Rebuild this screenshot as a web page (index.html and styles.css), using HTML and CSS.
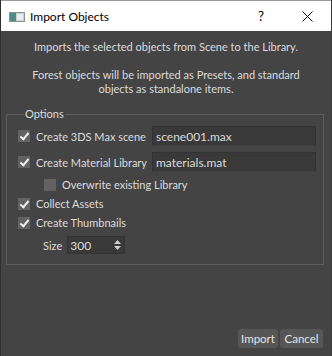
FILE: index.html
```html
<!DOCTYPE html>
<html>
<head>
<meta charset="utf-8">
<link rel="stylesheet" href="styles.css">
</head>
<body>
<div class="window">
  <div class="titlebar">
    <svg class="app-icon" width="16" height="10" viewBox="0 0 16 10">
      <rect x="0.5" y="0.5" width="15" height="9" fill="#c9d2d2" stroke="#8a9494"/>
      <rect x="1" y="1" width="6" height="8" fill="#4f8a86"/>
      <rect x="8" y="2" width="6" height="6" fill="#e8eeee"/>
    </svg>
    <span class="title">Import Objects</span>
    <span class="help">?</span>
    <svg class="close" width="11" height="11" viewBox="0 0 11 11">
      <path d="M0.5 0.5 L10.5 10.5 M10.5 0.5 L0.5 10.5" stroke="#111" stroke-width="1" fill="none"/>
    </svg>
  </div>
  <div class="content">
    <p class="desc">Imports the selected objects from Scene to the Library.</p>
    <p class="desc second">Forest objects will be imported as Presets, and standard<br>objects as standalone items.</p>
    <fieldset class="group">
      <legend class="legend">Options</legend>
      <div class="row tall">
        <span class="check on"></span>
        <span class="label fixed">Create 3DS Max scene</span>
        <span class="field">scene001.max</span>
      </div>
      <div class="row tall">
        <span class="check on"></span>
        <span class="label fixed">Create Material Library</span>
        <span class="field">materials.mat</span>
      </div>
      <div class="row indent">
        <span class="check"></span>
        <span class="label">Overwrite existing Library</span>
      </div>
      <div class="row">
        <span class="check on"></span>
        <span class="label">Collect Assets</span>
      </div>
      <div class="row">
        <span class="check on"></span>
        <span class="label">Create Thumbnails</span>
      </div>
      <div class="row tall size-row">
        <span class="label">Size</span>
        <span class="spin"><span class="spin-val">300</span>
          <svg class="arrows" width="7" height="12" viewBox="0 0 7 12">
            <path d="M3.5 1 L7 5 L0 5 Z M0 7 L7 7 L3.5 11 Z" fill="#cfcfcf"/>
          </svg>
        </span>
      </div>
    </fieldset>
    <div class="buttons">
      <span class="btn import">Import</span>
      <span class="btn cancel">Cancel</span>
    </div>
  </div>
</div>
</body>
</html>
```
FILE: styles.css
```css
* { box-sizing: border-box; }
html, body { margin: 0; padding: 0; }
body {
  width: 332px;
  height: 356px;
  overflow: hidden;
  font-family: "Lato", "Noto Sans", sans-serif;
  font-size: 11px;
  background: #444;
}
.window {
  width: 332px;
  height: 356px;
  display: flex;
  flex-direction: column;
  border-left: 1px solid #2f2f2f;
  border-right: 1px solid #3a3a3a;
}
.titlebar {
  height: 31px;
  flex: 0 0 31px;
  background: #fff;
  border-top: 1px solid #9a9a9a;
  display: flex;
  align-items: center;
  padding-left: 8px;
  color: #000;
}
.app-icon { flex: 0 0 auto; margin-top: 1px; }
.title { margin-left: 5px; font-size: 12px; flex: 1; }
.help { font-size: 13.5px; margin-right: 38px; }
.close { margin-right: 18px; }
.content {
  flex: 1;
  background: #444;
  color: #dcdcdc;
  display: flex;
  flex-direction: column;
  padding: 9px 7px 8px 5px;
}
.desc {
  margin: 0;
  text-align: center;
  line-height: 14px;
  padding-left: 2px;
}
.desc.second { margin-top: 14px; }
.group {
  margin: 11px 0 0 0;
  padding: 5px 7px 9px 11px;
  border: 1px solid #5c5c5c;
  display: flex;
  flex-direction: column;
  gap: 6px;
  min-width: 0;
}
.legend {
  padding: 0 1px;
  margin-left: 6px;
  line-height: 14px;
}
.row {
  display: flex;
  align-items: center;
  height: 13px;
  white-space: nowrap;
}
.row.tall { height: 20px; }
.row.indent { padding-left: 26px; }
.check {
  flex: 0 0 12px;
  width: 12px;
  height: 12px;
  background: #626262;
  margin-right: 6px;
  position: relative;
}
.check.on::after {
  content: "";
  position: absolute;
  left: 4px;
  top: 1px;
  width: 3px;
  height: 7px;
  border-right: 2px solid #f0f0f0;
  border-bottom: 2px solid #f0f0f0;
  transform: rotate(40deg);
}
.label.fixed { flex: 0 0 116px; }
.field {
  flex: 0 0 164px;
  height: 20px;
  background: #393939;
  border: 1px solid #333;
  border-bottom-color: #3e3e3e;
  padding-left: 3px;
  display: flex;
  align-items: center;
  font-size: 12px;
}
.size-row { padding-left: 25px; }
.size-row .label { margin-right: 5px; }
.spin {
  width: 58px;
  height: 18px;
  background: #393939;
  border: 1px solid #333;
  display: flex;
  align-items: center;
  padding-left: 2px;
  padding-right: 3px;
  justify-content: space-between;
  font-size: 12px;
}
.buttons {
  margin-top: auto;
  display: flex;
  justify-content: flex-end;
  gap: 2px;
  padding-right: 1px;
}
.btn {
  height: 19px;
  background: #565656;
  border-radius: 3px;
  color: #e4e4e4;
  display: flex;
  align-items: center;
  justify-content: center;
  font-size: 11.5px;
}
.btn.import { width: 40px; }
.btn.cancel { width: 43px; }
```
